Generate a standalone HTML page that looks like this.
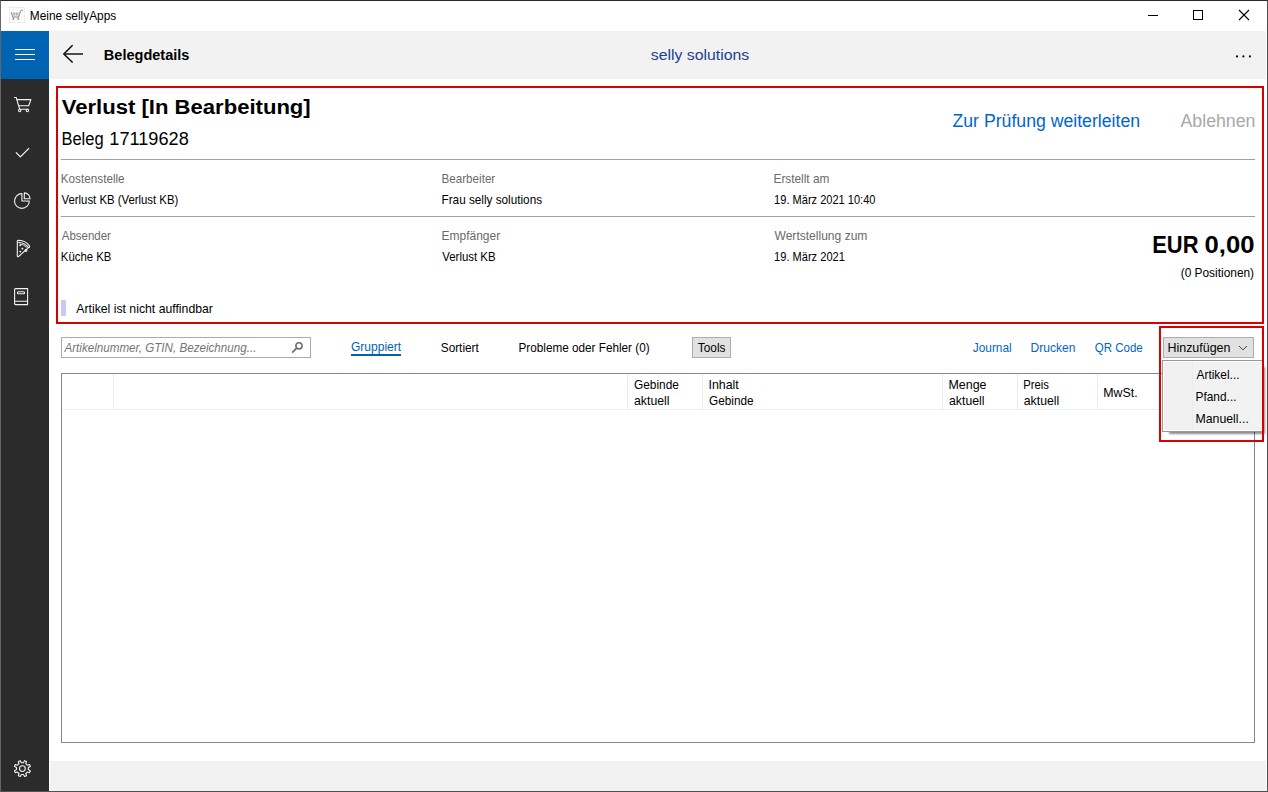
<!DOCTYPE html>
<html lang="de">
<head>
<meta charset="utf-8">
<title>Meine sellyApps</title>
<style>
html,body{margin:0;padding:0;}
body{width:1268px;height:792px;overflow:hidden;background:#fff;font-family:"Liberation Sans",sans-serif;position:relative;}
.a{position:absolute;}
.t{position:absolute;white-space:nowrap;line-height:20px;height:20px;transform-origin:0 0;}
.win{left:0;top:0;width:1266px;height:790px;border:1px solid #505050;border-top-color:#2a2a2a;border-left-color:#666;pointer-events:none;}
.hdr{left:50px;top:31px;width:1216px;height:48px;background:#f2f2f2;}
.ham{left:1px;top:31px;width:48px;height:48px;background:#0063b1;}
.side{left:1px;top:79px;width:48px;height:712px;background:#2b2b2b;}
.foot{left:50px;top:761px;width:1216px;height:30px;background:#f2f2f2;}
.red1{left:56px;top:86px;width:1204px;height:234px;border:2px solid #d90000;}
.red2{left:1159px;top:326px;width:101px;height:112px;border:2px solid #d90000;}
.hr{left:61px;width:1194px;height:1px;background:#a0a0a0;}
.note{left:61px;top:300px;width:5px;height:16px;background:#c9c9f6;}
.search{left:61px;top:337px;width:248px;height:19px;border:1px solid #ababab;background:#fff;}
.btn{top:337px;height:19px;border:1px solid #adadad;background:#e1e1e1;}
.grid{left:61px;top:373px;width:1192px;height:368px;border:1px solid #828790;}
.gh{top:374px;height:35px;width:1px;background:#eaeaea;}
.ghb{left:62px;top:409px;width:1192px;height:1px;background:#efefef;}
.ul{left:351px;top:353.5px;width:50px;height:2px;background:#0063b1;}
.pop{left:1162px;top:360px;width:99px;height:70px;border:1px solid #999;background:#f2f2f2;box-shadow:inset 0 0 0 1px #fbfbfb,4.8px 4.8px 2px -2.4px rgba(0,0,0,.46);}
.popi{left:1164px;top:362px;width:28px;height:68px;background:#f1f1f1;border-right:1px solid #ececec;}
</style>
</head>
<body>
<div class="a hdr"></div>
<div class="a ham"></div>
<div class="a side"></div>
<div class="a foot"></div>
<div class="a red1"></div>
<div class="a hr" style="top:159px"></div>
<div class="a hr" style="top:216px"></div>
<div class="a note"></div>
<div class="a search"></div>
<div class="a btn" style="left:692px;width:37px"></div>
<div class="a btn" style="left:1163px;width:89px"></div>
<div class="a ul"></div>
<div class="a grid"></div>
<div class="a gh" style="left:113px"></div>
<div class="a gh" style="left:627px"></div>
<div class="a gh" style="left:702px"></div>
<div class="a gh" style="left:942px"></div>
<div class="a gh" style="left:1017px"></div>
<div class="a gh" style="left:1097px"></div>
<div class="a ghb"></div>
<svg class="a" style="left:0;top:0" width="1268" height="792" viewBox="0 0 1268 792" fill="none" stroke-linecap="butt">
<g stroke="#fff" stroke-width="1">
<path d="M15 49.5H35M15 54.5H35M15 59.5H35"/>
</g>
<g stroke="#f2f2f2" stroke-width="1.1" stroke-linejoin="round">
<path d="M14 97.5H16.2L19.7 109.3H28.4"/>
<path d="M17 99.6H30.9L28.7 105.8H19"/>
<circle cx="19.7" cy="110.5" r="1.2"/><circle cx="27.4" cy="110.5" r="1.2"/>
<path d="M15.9 152.4L20.4 156.9L29.1 148.1" stroke-width="1.3"/>
<path d="M21.9 193.6A7.4 7.4 0 1 0 29.3 201H21.9Z"/>
<path d="M24.3 192.9A5.8 5.8 0 0 1 30.1 198.7H24.3Z"/>
<path d="M17.3 240.9V256.1Q17.6 257.2 18.6 256.5L28.4 247.6"/>
<path d="M17.3 241Q17.4 240.3 19 240.3Q25.5 240.6 29.6 246.1Q29.6 247.9 28.4 247.6Q24.6 242.4 17.6 242.3"/>
<path d="M19.6 243.8Q23.6 244.2 26.6 247.4" stroke-width="0.9"/>
<circle cx="26" cy="250.5" r="0.9"/>
<path d="M15.6 288.6H27.6V304.6H15.6Q14.6 304.6 14.6 303.6V289.6Q14.6 288.6 15.6 288.6ZM14.8 301.2H27.6"/>
<rect x="17.4" y="291.8" width="7.2" height="2" rx="1"/>
<path d="M23.44,762.69 L24.52,760.68 L26.50,761.50 L25.84,763.69 L27.31,765.16 L29.50,764.50 L30.32,766.48 L28.31,767.56 L28.31,769.64 L30.32,770.72 L29.50,772.70 L27.31,772.04 L25.84,773.51 L26.50,775.70 L24.52,776.52 L23.44,774.51 L21.36,774.51 L20.28,776.52 L18.30,775.70 L18.96,773.51 L17.49,772.04 L15.30,772.70 L14.48,770.72 L16.49,769.64 L16.49,767.56 L14.48,766.48 L15.30,764.50 L17.49,765.16 L18.96,763.69 L18.30,761.50 L20.28,760.68 L21.36,762.69Z"/>
<circle cx="22.4" cy="768.6" r="2.9"/>
</g>
<g fill="#f2f2f2" stroke="none">
<path d="M20.2 244.1L21.4 245.3L20.2 246.5L19 245.3ZM22.4 247.4L23.6 248.6L22.4 249.8L21.2 248.6ZM20.2 250.4L21.4 251.6L20.2 252.8L19 251.6Z"/>
</g>
<g stroke="#000" stroke-width="1.4" stroke-linejoin="miter">
<path d="M72.6 45.3L63.8 54L72.6 62.5"/>
<path d="M64 54H83" stroke="#222" stroke-width="1.6"/>
</g>
<g stroke="#000" stroke-width="1">
<path d="M1148 15.5H1158"/>
<rect x="1193.5" y="10.5" width="9" height="9"/>
<path d="M1239 10L1249 20M1249 10L1239 20" stroke-width="1.1"/>
</g>
<g fill="#000" stroke="none">
<circle cx="1237" cy="56.4" r="1.05"/><circle cx="1243.4" cy="56.4" r="1.05"/><circle cx="1249.9" cy="56.4" r="1.05"/>
</g>
<g stroke="#707070" stroke-width="1.4">
<circle cx="299" cy="345.8" r="3.1" stroke-width="1.6"/>
<path d="M296.6 348.2L292.2 352.7" stroke-width="1.8"/>
</g>
<path d="M1239 346L1243 349.8L1247 346" stroke="#444" stroke-width="1"/>
<g fill="none">
<rect x="9.5" y="7.5" width="15" height="15" fill="#fbfbfb" stroke="#ededed"/>
<path d="M11.2 12.2L12.7 17H18.7L20.4 11.2Q20.7 10.3 21.5 10.3H22.9" stroke="#828282" stroke-width="0.9"/>
<path d="M13.1 12.4V15.6M14.7 12.4V15.6M16.3 12.4V15.6M17.9 12.4V15.6" stroke="#8c8c8c" stroke-width="0.8"/>
<path d="M13.4 17V19M18.2 17V19M12.3 19.2H14.5M17.1 19.2H19.3" stroke="#868686" stroke-width="0.9"/>
</g>
</svg>
<div class="t" style="left:29px;top:6px;font-size:12.2px;color:#000;transform:translateX(0.78px) scaleX(0.9742);">Meine sellyApps</div>
<div class="t" style="left:103px;top:45px;font-size:15.2px;color:#000;transform:translateX(0.79px) scaleX(0.9573);font-weight:700;">Belegdetails</div>
<div class="t" style="left:650px;top:45px;font-size:15.2px;color:#1b3f8f;transform:translateX(0.78px) scaleX(1.0406);">selly solutions</div>
<div class="t" style="left:61px;top:97px;font-size:20px;color:#000;transform:translateX(0.72px) scaleX(1.1037);font-weight:700;">Verlust [In Bearbeitung]</div>
<div class="t" style="left:61px;top:129px;font-size:17.5px;color:#000;transform:translateX(0.39px) scaleX(0.9429);">Beleg </div>
<div class="t" style="left:109px;top:129px;font-size:17.5px;color:#000;transform:translateX(0.35px) scaleX(1.0369);">17119628</div>
<div class="t" style="left:60px;top:169px;font-size:12.2px;color:#6a6a6a;transform:translateX(0.79px) scaleX(0.9614);">Kostenstelle</div>
<div class="t" style="left:61px;top:190px;font-size:12.2px;color:#000;transform:translateX(0.52px) scaleX(0.9316);">Verlust KB (Verlust KB)</div>
<div class="t" style="left:441px;top:169px;font-size:12.2px;color:#6a6a6a;transform:translateX(0.55px) scaleX(0.9545);">Bearbeiter</div>
<div class="t" style="left:441px;top:190px;font-size:12.2px;color:#000;transform:translateX(0.54px) scaleX(0.9636);">Frau selly solutions</div>
<div class="t" style="left:773px;top:169px;font-size:12.2px;color:#6a6a6a;transform:translateX(0.53px) scaleX(0.9686);">Erstellt am</div>
<div class="t" style="left:774px;top:190px;font-size:12.2px;color:#000;transform:translateX(0.09px) scaleX(0.9070);">19. März 2021 10:40</div>
<div class="t" style="left:61px;top:226px;font-size:12.2px;color:#6a6a6a;transform:translateX(0.75px) scaleX(0.9423);">Absender</div>
<div class="t" style="left:60px;top:247px;font-size:12.2px;color:#000;transform:translateX(0.82px) scaleX(0.9333);">Küche KB</div>
<div class="t" style="left:441px;top:226px;font-size:12.2px;color:#6a6a6a;transform:translateX(0.52px) scaleX(0.9829);">Empfänger</div>
<div class="t" style="left:442px;top:247px;font-size:12.2px;color:#000;transform:translateX(0.27px) scaleX(0.9375);">Verlust KB</div>
<div class="t" style="left:774px;top:226px;font-size:12.2px;color:#6a6a6a;transform:translateX(0.50px) scaleX(0.9892);">Wertstellung zum</div>
<div class="t" style="left:774px;top:247px;font-size:12.2px;color:#000;transform:translateX(0.09px) scaleX(0.9082);">19. März 2021</div>
<div class="t" style="left:76px;top:299px;font-size:12.2px;color:#000;transform:translateX(0.25px) scaleX(1.0055);">Artikel ist nicht auffindbar</div>
<div class="t" style="left:952px;top:111px;font-size:17.5px;color:#0066cc;transform:translateX(0.50px) scaleX(1.0095);">Zur Prüfung weiterleiten</div>
<div class="t" style="left:1180px;top:111px;font-size:17.5px;color:#a8a8a8;transform:translateX(0.50px) scaleX(1.0137);">Ablehnen</div>
<div class="t" style="left:1152px;top:235px;font-size:23.4px;color:#000;transform:translateX(0.19px) scaleX(0.9376);font-weight:700;">EUR </div>
<div class="t" style="left:1204px;top:235px;font-size:23.4px;color:#000;transform:translateX(0.60px) scaleX(1.0966);font-weight:700;">0,00</div>
<div class="t" style="left:1180px;top:263px;font-size:12.2px;color:#000;transform:translateX(0.67px) scaleX(0.9763);">(0 Positionen)</div>
<div class="t" style="left:64px;top:338px;font-size:12.2px;color:#757575;transform:translateX(0.48px) scaleX(0.9538);font-style:italic;">Artikelnummer, GTIN, Bezeichnung...</div>
<div class="t" style="left:351px;top:337px;font-size:12.2px;color:#0063b1;transform:translateX(0.01px) scaleX(0.9851);">Gruppiert</div>
<div class="t" style="left:440px;top:338px;font-size:12.2px;color:#000;transform:translateX(0.77px) scaleX(0.9677);">Sortiert</div>
<div class="t" style="left:518px;top:338px;font-size:12.2px;color:#000;transform:translateX(0.54px) scaleX(0.9628);">Probleme oder Fehler (0)</div>
<div class="t" style="left:697px;top:338px;font-size:12.2px;color:#000;transform:translateX(0.76px) scaleX(0.9730);">Tools</div>
<div class="t" style="left:972px;top:338px;font-size:12.2px;color:#0066cc;transform:translateX(0.76px) scaleX(0.9744);">Journal</div>
<div class="t" style="left:1030px;top:338px;font-size:12.2px;color:#0066cc;transform:translateX(0.51px) scaleX(0.9886);">Drucken</div>
<div class="t" style="left:1094px;top:338px;font-size:12.2px;color:#0066cc;transform:translateX(0.78px) scaleX(0.9447);">QR Code</div>
<div class="t" style="left:1167px;top:338px;font-size:12.2px;color:#000;transform:translateX(0.48px) scaleX(1.0208);">Hinzufügen</div>
<div class="t" style="left:634px;top:375px;font-size:12.2px;color:#000;transform:translateX(0.01px) scaleX(0.9722);">Gebinde</div>
<div class="t" style="left:633px;top:391px;font-size:12.2px;color:#000;transform:translateX(1.00px) scaleX(1.0074);">aktuell</div>
<div class="t" style="left:708px;top:375px;font-size:12.2px;color:#000;transform:translateX(0.48px) scaleX(1.0174);">Inhalt</div>
<div class="t" style="left:709px;top:391px;font-size:12.2px;color:#000;transform:translateX(0.02px) scaleX(0.9667);">Gebinde</div>
<div class="t" style="left:948px;top:375px;font-size:12.2px;color:#000;transform:translateX(0.48px) scaleX(1.0210);">Menge</div>
<div class="t" style="left:948px;top:391px;font-size:12.2px;color:#000;transform:translateX(1.00px) scaleX(1.0074);">aktuell</div>
<div class="t" style="left:1023px;top:375px;font-size:12.2px;color:#000;transform:translateX(0.33px) scaleX(0.9238);">Preis</div>
<div class="t" style="left:1023px;top:391px;font-size:12.2px;color:#000;transform:translateX(0.75px) scaleX(1.0074);">aktuell</div>
<div class="t" style="left:1103px;top:383px;font-size:12.2px;color:#000;transform:translateX(0.23px) scaleX(1.0157);">MwSt.</div>
<div class="a pop"></div>
<div class="a popi"></div>
<div class="t" style="left:1196px;top:365px;font-size:12.2px;color:#000;transform:translateX(0.50px) scaleX(0.9767);">Artikel...</div>
<div class="t" style="left:1195px;top:387px;font-size:12.2px;color:#000;transform:translateX(0.53px) scaleX(0.9750);">Pfand...</div>
<div class="t" style="left:1195px;top:409px;font-size:12.2px;color:#000;transform:translateX(0.49px) scaleX(1.0099);">Manuell...</div>
<div class="a red2"></div>
<div class="a win"></div>
</body>
</html>
